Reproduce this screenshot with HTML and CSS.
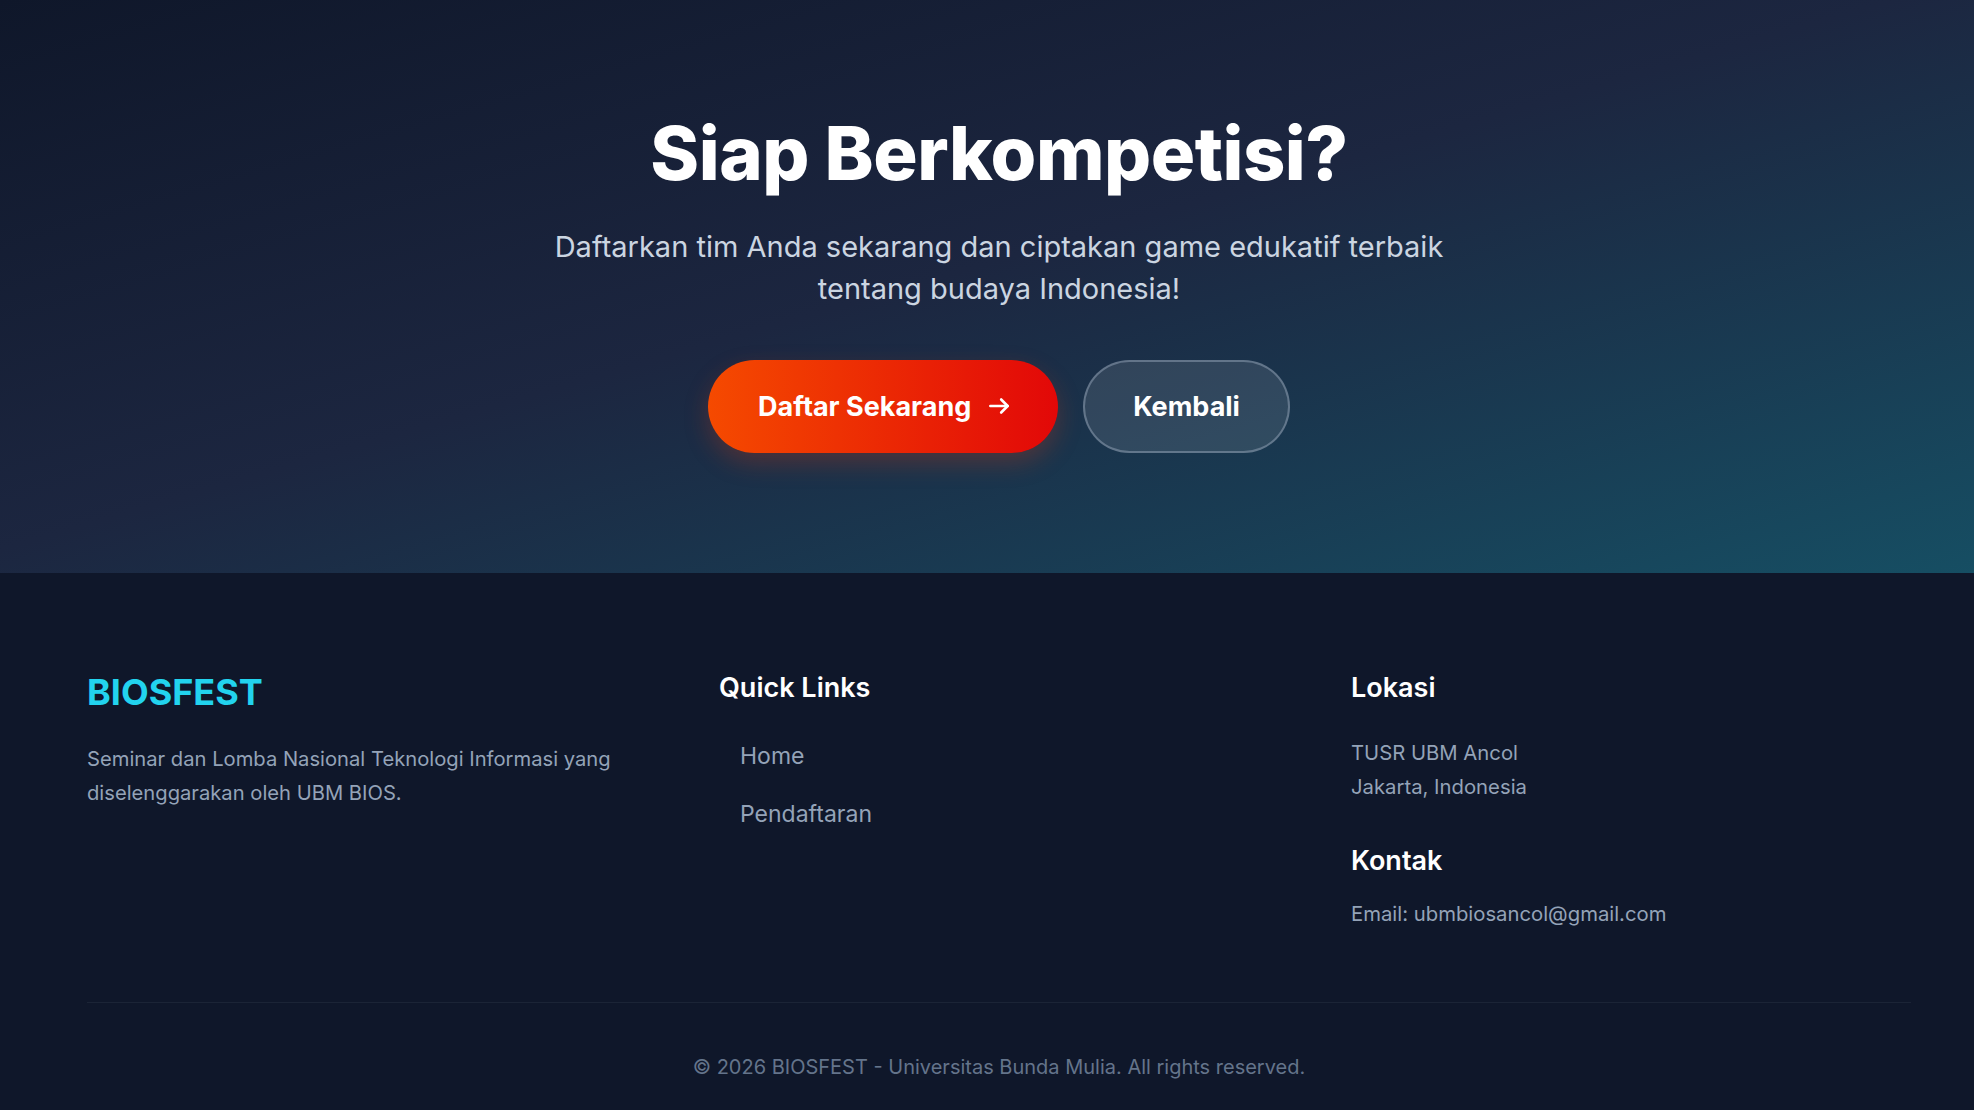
FILE: index.html
```html
<!DOCTYPE html>
<html lang="id">
<head>
<meta charset="utf-8">
<title>BIOSFEST</title>
<link rel="stylesheet" href="styles.css">
</head>
<body>
<section class="cta">
  <div class="container cta-inner">
    <h2 class="cta-title">Siap Berkompetisi?</h2>
    <p class="cta-text">Daftarkan tim Anda sekarang dan ciptakan game edukatif terbaik tentang budaya Indonesia!</p>
    <div class="cta-actions">
      <a class="btn btn-primary" href="#">Daftar Sekarang
        <svg class="btn-arrow" viewBox="0 0 24 24" width="26" height="26" fill="none" stroke="currentColor" stroke-width="2.4" stroke-linecap="round" stroke-linejoin="round"><path d="M4 12h16"/><path d="M14 6l6 6-6 6"/></svg>
      </a>
      <a class="btn btn-ghost" href="#">Kembali</a>
    </div>
  </div>
</section>
<footer class="footer">
  <div class="container">
    <div class="footer-grid">
      <div class="footer-col">
        <div class="brand">BIOSFEST</div>
        <p class="footer-desc">Seminar dan Lomba Nasional Teknologi Informasi yang diselenggarakan oleh UBM BIOS.</p>
      </div>
      <div class="footer-col">
        <h3 class="footer-heading">Quick Links</h3>
        <ul class="footer-links">
          <li><a href="#">Home</a></li>
          <li><a href="#">Pendaftaran</a></li>
        </ul>
      </div>
      <div class="footer-col">
        <h3 class="footer-heading">Lokasi</h3>
        <p class="footer-text">TUSR UBM Ancol<br>Jakarta, Indonesia</p>
        <h3 class="footer-heading footer-heading-second">Kontak</h3>
        <p class="footer-text footer-email">Email: ubmbiosancol@gmail.com</p>
      </div>
    </div>
    <div class="footer-bottom">
      <p>&copy; 2026 BIOSFEST - Universitas Bunda Mulia. All rights reserved.</p>
    </div>
  </div>
</footer>
</body>
</html>
```
FILE: styles.css
```css
* { box-sizing: border-box; }
html, body { margin: 0; padding: 0; }
body {
  font-family: Inter, "Noto Sans", "Liberation Sans", sans-serif;
  background: #0f172a;
  color: #fff;
  width: 1974px;
  overflow: hidden;
}
.container {
  margin: 0 63px 0 87px;
}
.cta {
  background: linear-gradient(to bottom right, #0f172a 0%, #1c2640 48%, #164e63 100%);
  height: 573px;
  padding-top: 109px;
}
.cta-inner {
  display: flex;
  flex-direction: column;
  align-items: center;
  text-align: center;
}
.cta-title {
  margin: 0;
  font-size: 74px;
  line-height: 1.2;
  font-weight: 800;
  letter-spacing: -0.5px;
}
.cta-text {
  margin: 28px 0 0;
  max-width: 930px;
  font-size: 29px;
  line-height: 42px;
  color: #cbd5e1;
}
.cta-actions {
  margin-top: 50px;
  display: flex;
  gap: 25px;
}
.btn {
  display: inline-flex;
  align-items: center;
  justify-content: center;
  height: 93px;
  padding: 0 48px;
  border-radius: 999px;
  font-size: 27px;
  font-weight: 700;
  color: #fff;
  text-decoration: none;
}
.btn-primary {
  gap: 15px;
  padding: 0 46px 0 50px;
  background: linear-gradient(90deg, #f54a00, #e20808);
  box-shadow: 0 10px 25px rgba(234, 60, 12, 0.25);
}
.btn-arrow { width: 26px; height: 26px; }
.btn-ghost {
  padding: 0 48px;
  background: rgba(255, 255, 255, 0.1);
  border: 2px solid rgba(148, 163, 184, 0.5);
}
.footer {
  background: #0f172a;
  padding-top: 98px;
  height: 537px;
}
.footer-grid {
  display: grid;
  grid-template-columns: repeat(3, 1fr);
  column-gap: 72px;
}
.brand {
  font-size: 36px;
  line-height: 1.2;
  font-weight: 700;
  color: #22d3ee;
}
.footer-desc {
  margin: 28px 0 0;
  font-size: 20.2px;
  line-height: 34px;
  color: #94a3b8;
  max-width: 560px;
}
.footer-heading {
  margin: 1px 0 0;
  font-size: 27px;
  line-height: 1.2;
  font-weight: 600;
  color: #fff;
}
.footer-links {
  list-style: none;
  margin: 35px 0 0;
  padding: 0 0 0 21px;
  display: flex;
  flex-direction: column;
  gap: 24px;
}
.footer-links a {
  font-size: 23px;
  line-height: 34px;
  color: #94a3b8;
  text-decoration: none;
}
.footer-text {
  margin: 32px 0 0;
  font-size: 20.3px;
  line-height: 34px;
  color: #94a3b8;
}
.footer-heading-second { margin-top: 41px; }
.footer-email { margin-top: 19px; }
.footer-bottom {
  margin-top: 71px;
  border-top: 1px solid #1b2436;
  padding-top: 49px;
  text-align: center;
}
.footer-bottom p {
  margin: 0;
  font-size: 20px;
  line-height: 30px;
  color: #64748b;
}
```
